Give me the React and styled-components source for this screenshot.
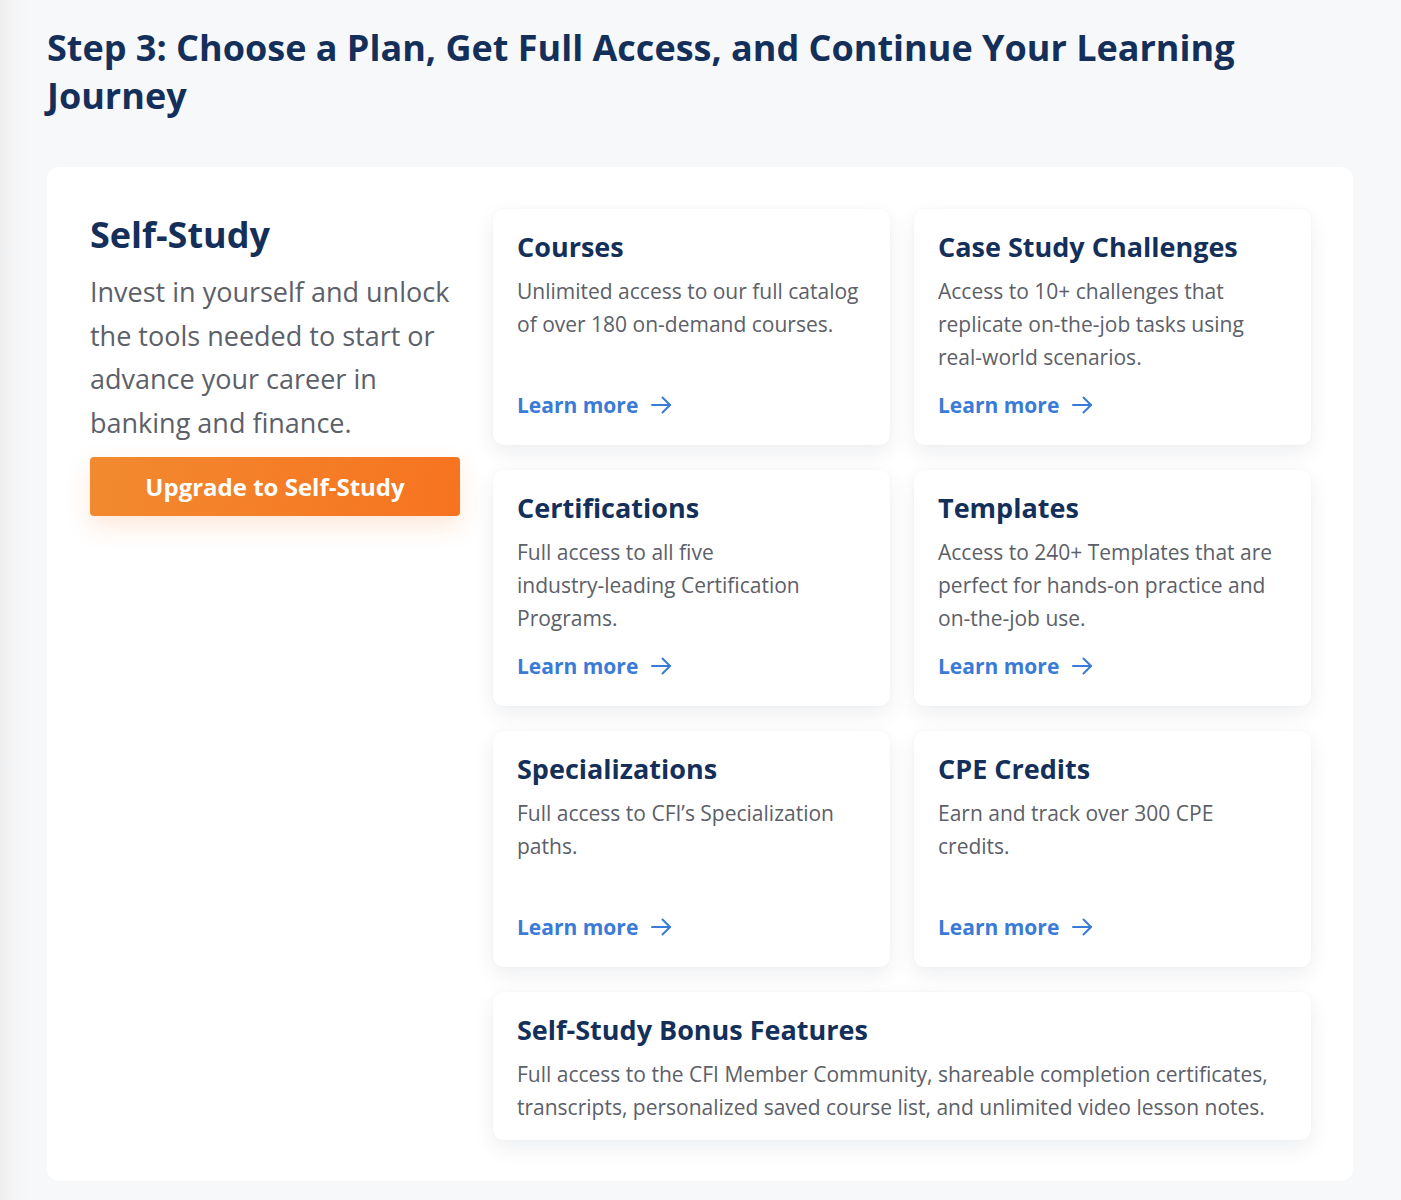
import styled, { createGlobalStyle } from 'styled-components'

const GlobalStyle = createGlobalStyle`
  html, body {
    margin: 0;
    padding: 0;
    background: #f7f8fa;
  }
  body {
    font-family: "Open Sans", "Noto Sans", sans-serif;
    -webkit-font-smoothing: antialiased;
  }
  * { box-sizing: border-box; }
`;

const NoWrap = styled.span`
  white-space: nowrap;
`;

const features = [
    {title: 'Courses', text: 'Unlimited access to our full catalog of over 180 on-demand courses.'},
    {title: 'Case Study Challenges', text: 'Access to 10+ challenges that replicate on-the-job tasks using real-world scenarios.'},
    {title: 'Certifications', text: <>Full access to all five <NoWrap>industry-leading</NoWrap> Certification Programs.</>},
    {title: 'Templates', text: 'Access to 240+ Templates that are perfect for hands-on practice and on-the-job use.'},
    {title: 'Specializations', text: 'Full access to CFI’s Specialization paths.'},
    {title: 'CPE Credits', text: 'Earn and track over 300 CPE credits.'},
];

const Arrow = () => (
    <svg width="22" height="18" viewBox="0 0 22 18" fill="none" stroke="currentColor" strokeWidth="2" strokeLinecap="round" strokeLinejoin="round">
        <path d="M2 9h18"/>
        <path d="M12.5 1.5L20 9l-7.5 7.5"/>
    </svg>
);

const App = () => {
    return (
        <Page>
            <GlobalStyle/>
            <Heading>Step 3: Choose a Plan, Get Full Access, and Continue Your Learning Journey</Heading>
            <Panel>
                <Intro>
                    <PlanTitle>Self-Study</PlanTitle>
                    <PlanText>Invest in yourself and unlock the tools needed to start or advance your career in banking and finance.</PlanText>
                    <UpgradeButton>Upgrade to Self-Study</UpgradeButton>
                </Intro>
                <Grid>
                    {features.map(f => (
                        <Card key={f.title}>
                            <CardTitle>{f.title}</CardTitle>
                            <CardText>{f.text}</CardText>
                            <LearnMore href="#">Learn more <Arrow/></LearnMore>
                        </Card>
                    ))}
                    <BonusCard>
                        <CardTitle>Self-Study Bonus Features</CardTitle>
                        <CardText>Full access to the CFI Member Community, shareable completion certificates, transcripts, personalized saved course list, and unlimited video lesson notes.</CardText>
                    </BonusCard>
                </Grid>
            </Panel>
        </Page>
    )
};

const Page = styled.div`
  min-height: 1200px;
  padding: 24px 48px 20px 47px;
  background: linear-gradient(to right, #eeeeef 0px, #f4f5f6 14px, #f7f8fa 28px);
`;

const Heading = styled.h1`
  margin: 0 0 47px;
  max-width: 1240px;
  font-size: 36px;
  line-height: 48px;
  font-weight: 700;
  color: #14305a;
`;

const Panel = styled.section`
  background: #fff;
  border-radius: 12px;
  padding: 42px 42px 41px 43px;
  display: flex;
  gap: 33px;
  align-items: flex-start;
`;

const Intro = styled.div`
  width: 370px;
  flex-shrink: 0;
  margin-top: 2px;
`;

const PlanTitle = styled.h2`
  margin: 0 0 11px;
  font-size: 36px;
  line-height: 48px;
  font-weight: 700;
  color: #14305a;
`;

const PlanText = styled.p`
  margin: 0 0 13px;
  font-size: 27px;
  line-height: 43.6px;
  color: #5c6068;
`;

const UpgradeButton = styled.button`
  width: 370px;
  height: 59px;
  border: none;
  border-radius: 4px;
  background: linear-gradient(100deg, #f28a30 0%, #f7731f 100%);
  color: #fff;
  font-family: inherit;
  font-size: 24px;
  font-weight: 700;
  box-shadow: 0 10px 24px rgba(245, 120, 40, 0.18);
  cursor: pointer;
`;

const Grid = styled.div`
  flex: 1;
  display: grid;
  grid-template-columns: 1fr 1fr;
  column-gap: 24px;
  row-gap: 25px;
`;

const Card = styled.div`
  height: 236px;
  padding: 20px 24px 25px;
  background: #fff;
  border-radius: 10px;
  box-shadow: 0 8px 22px rgba(20, 30, 50, 0.07), 0 0 3px rgba(20, 30, 50, 0.04);
  display: flex;
  flex-direction: column;
`;

const BonusCard = styled(Card)`
  grid-column: 1 / -1;
  height: 148px;
`;

const CardTitle = styled.h3`
  margin: 0 0 10px;
  font-size: 27px;
  line-height: 36px;
  font-weight: 700;
  color: #14305a;
`;

const CardText = styled.p`
  margin: 0;
  font-size: 21px;
  line-height: 33px;
  color: #5c6068;
`;

const LearnMore = styled.a`
  margin-top: auto;
  display: inline-flex;
  align-items: center;
  gap: 12px;
  font-size: 21px;
  line-height: 30px;
  font-weight: 700;
  color: #3a7bd8;
  text-decoration: none;
`;

export default App;
